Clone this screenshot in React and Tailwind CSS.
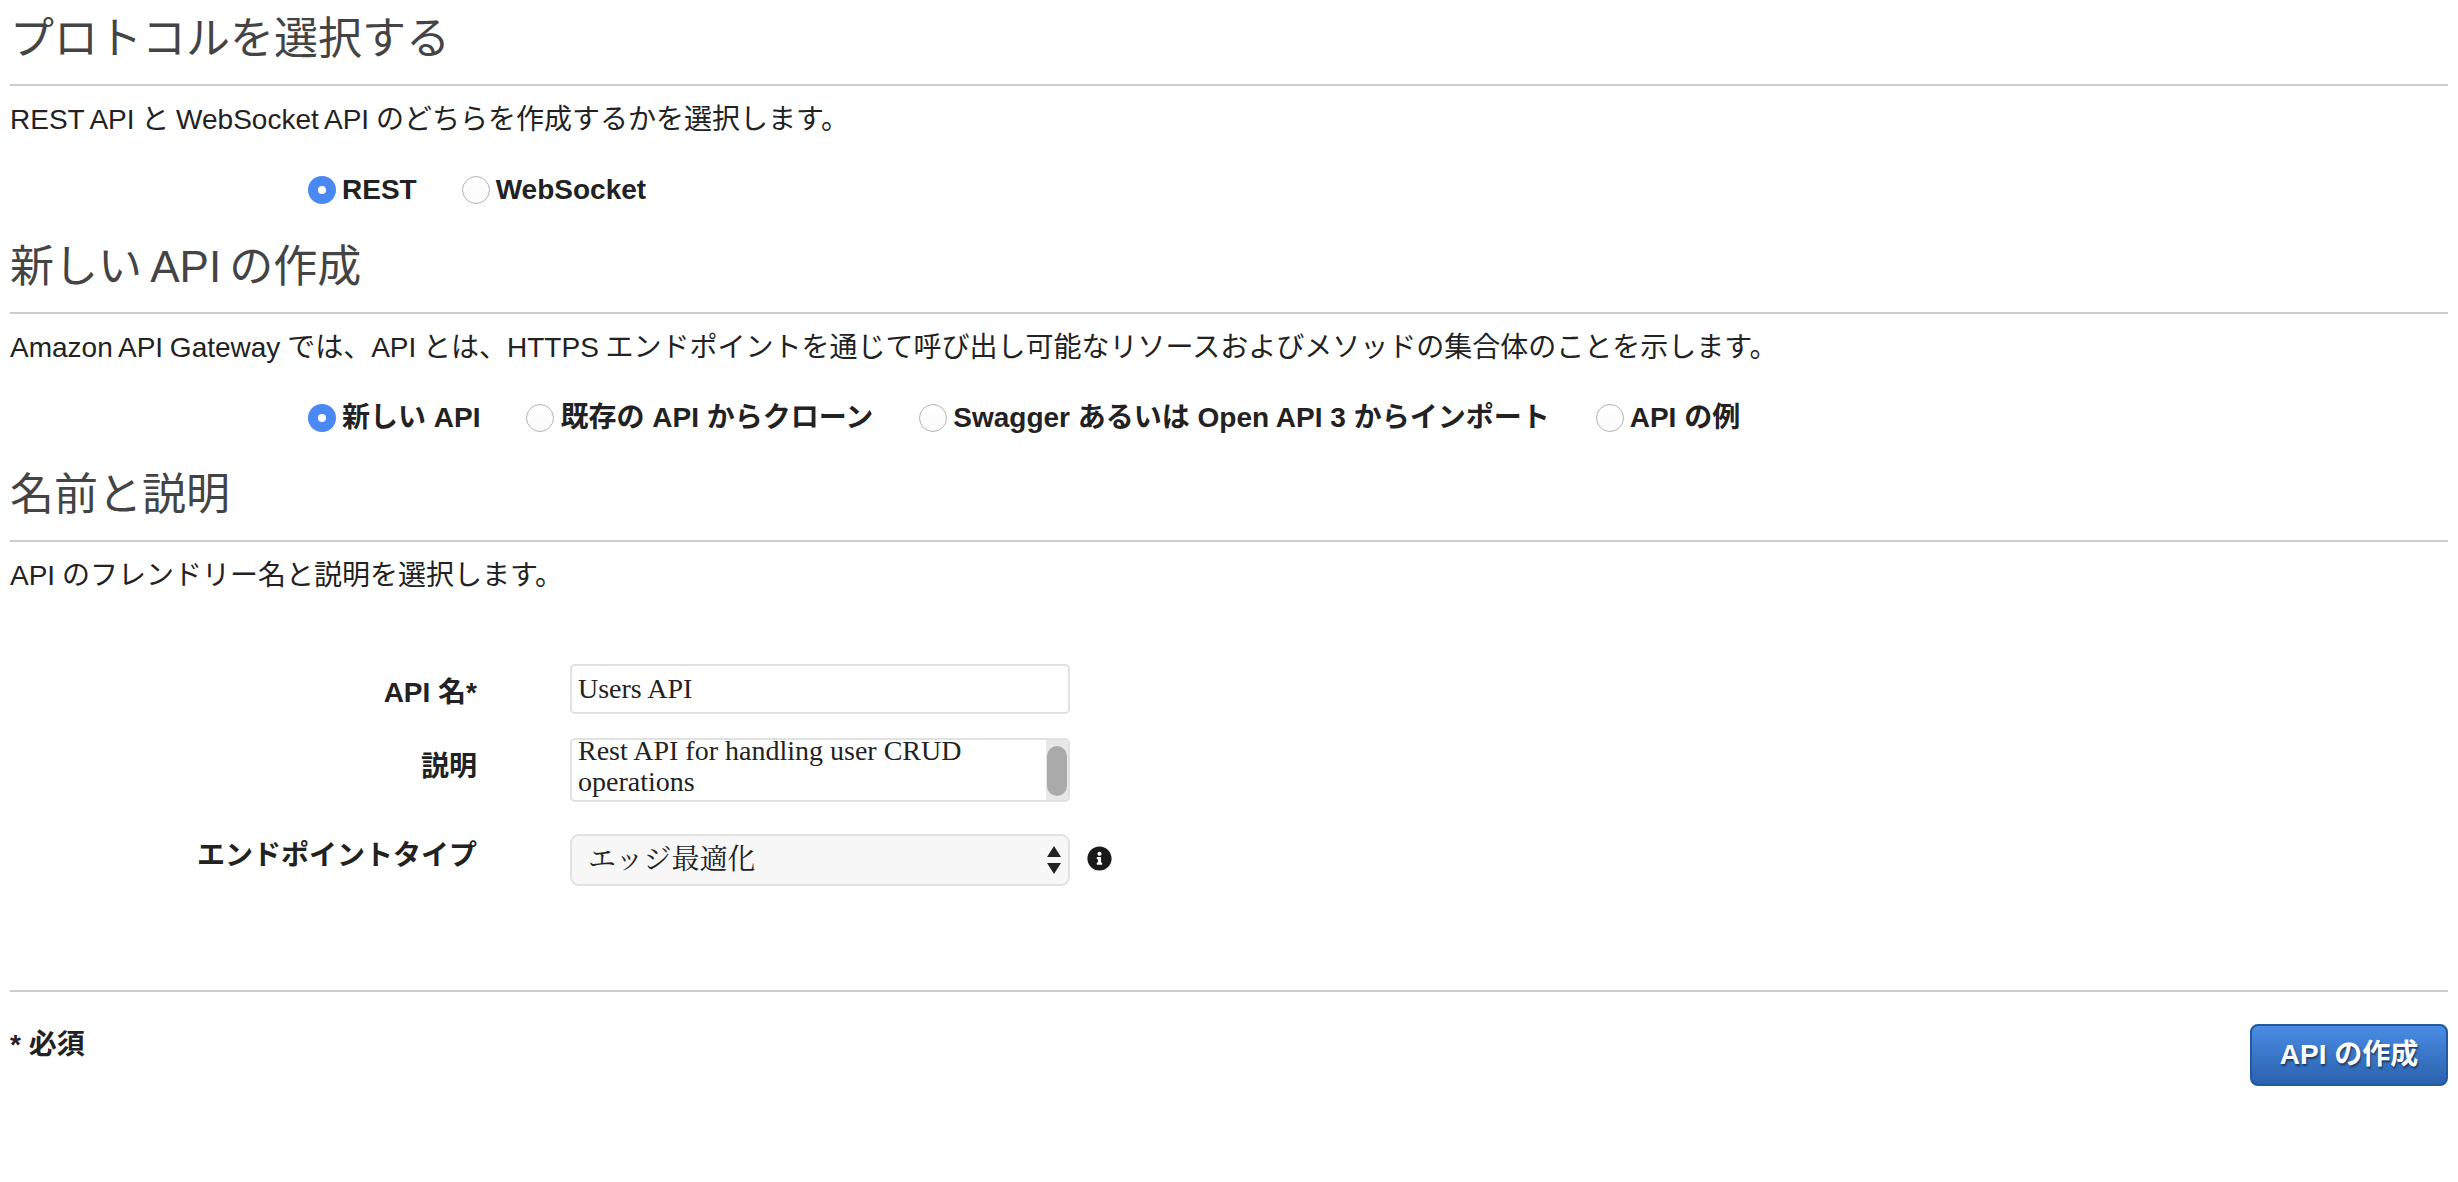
import { FaInfoCircle } from 'react-icons/fa';

const sans = "font-['Liberation_Sans','Noto_Sans_CJK_JP',sans-serif]";

function Radio({ label, checked }) {
  return (
    <label className="flex items-center gap-[6px] text-[28px] font-bold text-[#222]">
      {checked ? (
        <span className="flex h-[28px] w-[28px] items-center justify-center rounded-full bg-[#4a89f3]">
          <span className="h-[8px] w-[8px] rounded-full bg-white" />
        </span>
      ) : (
        <span className="h-[28px] w-[28px] rounded-full border-[1.5px] border-[#b4b4b4] bg-gradient-to-b from-white to-[#fafafa]" />
      )}
      {label}
    </label>
  );
}

function Section({ title, description, children }) {
  return (
    <section>
      <h2 className="flex h-[86px] items-start border-b-2 border-[#ccc] pt-[16px] text-[44px] leading-[46px] font-normal text-[#444] [word-spacing:-4px]">
        {title}
      </h2>
      <p className="flex h-[68px] items-center text-[28px] text-[#222] [word-spacing:-1px]">{description}</p>
      {children}
    </section>
  );
}

function FormRow({ label, labelClass, children, className }) {
  return (
    <div className={`flex items-start gap-[93px] ${className}`}>
      <div className={`w-[467px] text-right text-[28px] font-bold text-[#222] ${labelClass}`}>{label}</div>
      {children}
    </div>
  );
}

export default function App() {
  return (
    <div className={`min-h-[1182px] bg-white px-[10px] ${sans}`}>
      <Section title="プロトコルを選択する" description="REST API と WebSocket API のどちらを作成するかを選択します。">
        <div className="flex h-[74px] items-start gap-[45px] pt-[15px] pl-[298px]">
          <Radio label="REST" checked />
          <Radio label="WebSocket" />
        </div>
      </Section>

      <Section
        title="新しい API の作成"
        description="Amazon API Gateway では、API とは、HTTPS エンドポイントを通じて呼び出し可能なリソースおよびメソッドの集合体のことを示します。"
      >
        <div className="flex h-[74px] items-start gap-[46px] pt-[15px] pl-[298px]">
          <Radio label="新しい API" checked />
          <Radio label="既存の API からクローン" />
          <Radio label="Swagger あるいは Open API 3 からインポート" />
          <Radio label="API の例" />
        </div>
      </Section>

      <Section title="名前と説明" description="API のフレンドリー名と説明を選択します。" />

      <form className="pt-[54px]">
        <FormRow label="API 名*" labelClass="pt-[8px]" className="h-[74px]">
          <input
            readOnly
            value="Users API"
            className="h-[50px] w-[500px] rounded-[5px] border-2 border-[#e1e1e1] bg-white px-[6px] font-['Liberation_Serif',serif] text-[28px] text-[#222] outline-none"
          />
        </FormRow>

        <FormRow label="説明" labelClass="pt-[8px]" className="h-[96px]">
          <div className="flex h-[64px] w-[500px] overflow-hidden rounded-[5px] border-2 border-[#e1e1e1] bg-white">
            <textarea
              readOnly
              value="Rest API for handling user CRUD operations"
              className="-mt-[5px] h-[70px] min-w-0 flex-1 resize-none overflow-hidden px-[6px] font-['Liberation_Serif',serif] text-[28px] leading-[31px] text-[#222] outline-none"
            />
            <div className="flex w-[22px] items-start justify-center bg-[#e8e8e8] pt-[6px]">
              <div className="h-[50px] w-[20px] rounded-full bg-[#aaa]" />
            </div>
          </div>
        </FormRow>

        <FormRow label="エンドポイントタイプ" labelClass="pt-[1px]" className="h-[156px]">
          <div className="flex items-center gap-[17px]">
            <div className="relative">
              <select className="h-[52px] w-[500px] appearance-none rounded-[9px] border-2 border-[#e1e1e1] bg-[#f7f7f7] px-[16px] font-['Liberation_Serif','Noto_Serif_CJK_JP',serif] text-[28px] text-[#222] outline-none">
                <option>エッジ最適化</option>
              </select>
              <svg className="absolute top-[12px] right-[9px]" width="14" height="28" viewBox="0 0 14 28">
                <path d="M7 0 L14 11 H0 Z M0 17 H14 L7 28 Z" fill="#222" />
              </svg>
            </div>
            <FaInfoCircle className="-mt-[3px] h-[25px] w-[25px] text-[#1a1a1a]" />
          </div>
        </FormRow>
      </form>

      <div className="flex items-start justify-between border-t-2 border-[#ccc] pt-[32px]">
        <span className="text-[28px] font-bold text-[#222]">* 必須</span>
        <button
          type="button"
          className="h-[62px] w-[198px] rounded-[8px] border-2 border-[#22599f] bg-gradient-to-b from-[#4a8ce4] to-[#2a62ae] text-[28px] font-bold text-white [text-shadow:1px_2px_2px_rgba(0,0,0,0.5)]"
        >
          API の作成
        </button>
      </div>
    </div>
  );
}
